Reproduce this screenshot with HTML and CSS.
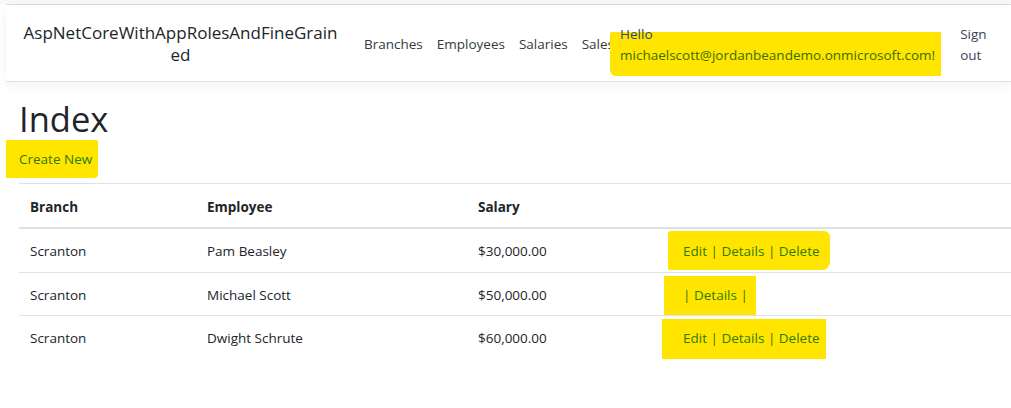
FILE: index.html
```html
<!DOCTYPE html>
<html lang="en">
<head>
<meta charset="utf-8">
<title>Index</title>
<link rel="stylesheet" href="styles.css">
</head>
<body>
<div class="frame">
  <header class="navbar">
    <a class="brand" href="#">AspNetCoreWithAppRolesAndFineGrain<br>ed</a>
    <nav class="nav-links">
      <a class="nav-link" href="#">Branches</a>
      <a class="nav-link" href="#">Employees</a>
      <a class="nav-link" href="#">Salaries</a>
      <a class="nav-link" href="#">Sales</a>
    </nav>
    <div class="user">
      <span class="hello">Hello</span>
      <span class="email hl">michaelscott@jordanbeandemo.onmicrosoft.com!</span>
    </div>
    <a class="signout" href="#">Sign<br>out</a>
  </header>
  <main class="main">
    <h1 class="title">Index</h1>
    <p class="create"><a class="hl hl-create" href="#">Create New</a></p>
    <table class="grid">
      <thead>
        <tr>
          <th class="c1">Branch</th>
          <th class="c2">Employee</th>
          <th class="c3">Salary</th>
          <th class="c4"></th>
        </tr>
      </thead>
      <tbody>
        <tr>
          <td>Scranton</td>
          <td>Pam Beasley</td>
          <td>$30,000.00</td>
          <td><span class="actions hl a1"><a href="#">Edit</a> | <a href="#">Details</a> | <a href="#">Delete</a></span></td>
        </tr>
        <tr>
          <td>Scranton</td>
          <td>Michael Scott</td>
          <td>$50,000.00</td>
          <td><span class="actions hl a2"> | <a href="#">Details</a> | </span></td>
        </tr>
        <tr>
          <td>Scranton</td>
          <td>Dwight Schrute</td>
          <td>$60,000.00</td>
          <td><span class="actions hl a3"><a href="#">Edit</a> | <a href="#">Details</a> | <a href="#">Delete</a></span></td>
        </tr>
      </tbody>
    </table>
  </main>
</div>
</body>
</html>
```

FILE: styles.css
```css
html, body {
  margin: 0;
  padding: 0;
  background: #ffffff;
}

body {
  font-family: "Open Sans", "Noto Sans", sans-serif;
  font-size: 13.5px;
  line-height: 21px;
  color: #212529;
  background: linear-gradient(#f7f7f7 0, #f7f7f7 4px, #ffffff 4px);
}

a {
  text-decoration: none;
}

.frame {
  margin: 4px 0 0 6px;
  border-top: 1px solid #dcdcdc;
  background: #fff;
}

.navbar {
  display: flex;
  align-items: center;
  height: 76px;
  padding-left: 17px;
  border-bottom: 1px solid #dee2e6;
  box-shadow: 0 4px 12px rgba(0, 0, 0, 0.05);
}

.brand {
  width: 315px;
  text-align: center;
  font-size: 17px;
  line-height: 22px;
  color: #212529;
  margin: 2px 20px 0 0;
}

.nav-links {
  display: flex;
  margin-top: 2px;
}

.nav-link {
  color: #343a40;
  padding: 0 7px;
}

.nav-link:first-child {
  padding-left: 6px;
}

.user {
  display: flex;
  flex-direction: column;
  align-items: flex-start;
  margin: 3px 0 0 -1px;
}

.hello {
  color: #2b4a78;
  position: relative;
  z-index: 1;
}

.hl {
  background: #ffe500;
}

.email {
  color: #3c6e00;
  padding: 13px 6px 10px 10px;
  margin: -13px 0 -10px -10px;
  border-radius: 2px 0 0 6px;
}

.signout {
  color: #3d3f5a;
  margin: 3px 0 0 19px;
}

.main {
  padding: 16px 0 0 13px;
}

.title {
  font-size: 34.5px;
  font-weight: 500;
  line-height: 42px;
  margin: 0 0 8px 0;
  color: #212529;
}

.create {
  margin: 0 0 14px 0;
  padding-top: 1px;
  height: 20px;
}

.hl-create {
  display: inline-block;
  color: #2f7d00;
  padding: 9px 6px 8px 13px;
  margin: -9px 0 -8px -13px;
  border-radius: 0 2px 4px 0;
}

.grid {
  width: 100%;
  border-collapse: collapse;
}

.grid th,
.grid td {
  text-align: left;
  padding: 12px 11px 9.5px;
  border-top: 1px solid #dee2e6;
  vertical-align: middle;
}

.grid th {
  font-weight: 700;
  padding-top: 12.5px;
  padding-bottom: 9.5px;
  border-bottom: 2px solid #dee2e6;
}

.c1 { width: 155px; }
.c2 { width: 249px; }
.c3 { width: 183px; }

.actions {
  display: inline-block;
  color: #3c6e00;
}

.actions a {
  color: #2f7d00;
}

.a1 {
  padding: 10px 10px 8px 15px;
  margin: -10px 0 -8px -15px;
  border-radius: 3px 6px 8px 2px;
}

.a2 {
  padding: 9px 8px 9px 19px;
  margin: -9px 0 -9px -19px;
}

.a3 {
  padding: 9px 6px 10px 21px;
  margin: -9px 0 -10px -21px;
}
```
